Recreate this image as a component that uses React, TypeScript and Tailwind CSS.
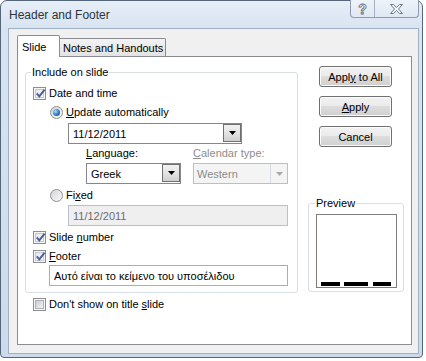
import type { ReactNode } from "react";

function Checkbox({ checked = false }: { checked?: boolean }) {
  return (
    <span className="relative flex h-[13px] w-[13px] shrink-0 items-center justify-center border border-[#8e8f8f] bg-[#f6f6f6]">
      <span
        className={
          checked
            ? "h-[9px] w-[9px] border border-[#c4c8cd] bg-[linear-gradient(135deg,#e3e6ea,#ffffff)]"
            : "h-[9px] w-[9px] border border-[#aeb3b9] bg-[linear-gradient(135deg,#c9cdd3,#f4f4f4)]"
        }
      />
      {checked ? (
        <svg
          className="absolute left-[1px] top-[0px]"
          width="11"
          height="11"
          viewBox="0 0 11 11"
        >
          <path
            d="M1.8 5.4 L4.3 8.4 L9.6 1.6"
            fill="none"
            stroke="#4b5e98"
            strokeWidth="1.9"
          />
        </svg>
      ) : null}
    </span>
  );
}

function Radio({ checked = false }: { checked?: boolean }) {
  return (
    <span className="flex h-[13px] w-[13px] shrink-0 items-center justify-center rounded-full border border-[#8e8f8f] bg-[linear-gradient(135deg,#d2d5d9,#fbfbfb)]">
      {checked ? (
        <span className="h-[7px] w-[7px] rounded-full bg-[radial-gradient(circle_at_35%_35%,#a9def8,#2c78c4_55%,#0f3d7c)]" />
      ) : null}
    </span>
  );
}

function Arrow({ color }: { color: string }) {
  return (
    <svg width="7" height="4" viewBox="0 0 7 4">
      <polygon points="0,0 7,0 3.5,4" fill={color} />
    </svg>
  );
}

function Combo({
  value,
  className,
  disabled = false,
}: {
  value: string;
  className: string;
  disabled?: boolean;
}) {
  return (
    <div
      className={
        disabled
          ? `flex h-[21px] items-center border border-[#b4c1d0] bg-[#f4f4f4] pl-[3px] text-[#8b8b8b] ${className}`
          : `flex h-[21px] items-center border border-[#828790] bg-white pl-[4px] ${className}`
      }
    >
      <span className="flex-1">{value}</span>
      {disabled ? (
        <span className="flex h-[19px] w-[17px] items-center justify-center border-l border-[#d3dbe4] bg-[#f4f4f4]">
          <Arrow color="#a8a8a8" />
        </span>
      ) : (
        <span className="mb-[1px] flex h-[18px] w-[18px] items-center justify-center self-start border border-[#707070] bg-[linear-gradient(180deg,#f2f2f2,#e3e3e3_50%,#cfcfcf)]">
          <Arrow color="#000000" />
        </span>
      )}
    </div>
  );
}

function Btn({ children }: { children: ReactNode }) {
  return (
    <button
      type="button"
      className="ml-[11px] flex h-[21px] w-[73px] items-center justify-center rounded-[3px] border border-[#707070] bg-[linear-gradient(180deg,#f2f2f2_0%,#ebebeb_45%,#dddddd_50%,#cfcfcf_100%)] shadow-[inset_0_0_0_1px_#fbfbfb]"
    >
      <span>{children}</span>
    </button>
  );
}

function TitleButtons() {
  return (
    <div className="-mt-px mr-[3px] flex h-[18px] overflow-hidden rounded-b-[4px] border border-t-0 border-[#8d9cb1] bg-[linear-gradient(180deg,#eef3f9,#dfe8f3)]">
      <span className="flex w-[24px] items-center justify-center border-r border-[#a4b2c4] text-[14px] font-bold text-[#f7f9fc] [-webkit-text-stroke:0.8px_#5c6b80]">
        ?
      </span>
      <span className="flex w-[43px] items-center justify-center">
        <svg width="13" height="10" viewBox="0 0 13 10">
          <polygon
            points="0.5,0.5 3.5,0.5 6.5,3.5 9.5,0.5 12.5,0.5 8.5,5 12.5,9.5 9.5,9.5 6.5,6.5 3.5,9.5 0.5,9.5 4.5,5"
            fill="#f5f8fb"
            stroke="#5c6b80"
            strokeWidth="0.9"
          />
        </svg>
      </span>
    </div>
  );
}

export default function App() {
  return (
    <div className="h-[361px] w-[426px] bg-white font-['Liberation_Sans','Noto_Sans',sans-serif] text-[11px] leading-[16px] text-black">
      <div className="flex h-[358px] w-[423px] flex-col rounded-t-[7px] rounded-b-[4px] border border-[#55657a] bg-[linear-gradient(180deg,#e6eef7_0px,#d8e4f1_28px,#ccdaeb_100%)]">
        <div className="flex h-[27px] items-start justify-between">
          <span className="ml-[8px] mt-[6px] text-[12px] text-[#2a3542]">Header and Footer</span>
          <TitleButtons />
        </div>

        <div className="ml-[7px] flex h-[326px] w-[411px] flex-col border border-[#a0b1c6] bg-[#f0f0f0] pl-[8px] pt-[6px]">
          <div className="flex h-[21px] items-end">
            <div className="relative z-10 -mb-px flex h-[22px] w-[43px] items-start rounded-t-[2px] border border-b-0 border-[#898c95] bg-white pl-[4px] pt-[3px]">
              Slide
            </div>
            <div className="flex h-[18px] w-[106px] items-center rounded-tr-[2px] border-r border-t border-[#898c95] bg-[linear-gradient(180deg,#f3f3f3,#e3e3e3)] pl-[3px] pt-[1px]">
              Notes and Handouts
            </div>
          </div>

          <div className="flex h-[289px] w-[395px] border border-[#898c95] bg-white">
            <div className="w-[280px] pl-[7px]">
              <fieldset className="mt-[7px] w-[273px] min-w-0 rounded-[3px] border border-[#d5dfe5] pb-[6px]">
                <legend className="ml-[5px] px-[1px]">Include on slide</legend>

                <div className="ml-[7px] mt-[5px] flex h-[16px] items-center gap-[3px]">
                  <Checkbox checked />
                  <span>Date and time</span>
                </div>

                <div className="ml-[24px] mt-[3px] flex h-[16px] items-center gap-[3px]">
                  <Radio checked />
                  <span>
                    <u>U</u>pdate automatically
                  </span>
                </div>

                <Combo value="11/12/2011" className="ml-[42px] mt-[3px] w-[174px]" />

                <div className="ml-[60px] mt-[1px] flex h-[16px] items-center">
                  <span className="w-[107px]">
                    <u>L</u>anguage:
                  </span>
                  <span className="text-[#8d8d8d]">
                    <u>C</u>alendar type:
                  </span>
                </div>

                <div className="ml-[60px] mt-[2px] flex gap-[12px]">
                  <Combo value="Greek" className="w-[95px]" />
                  <Combo value="Western" className="w-[95px]" disabled />
                </div>

                <div className="ml-[24px] mt-[3px] flex h-[16px] items-center gap-[3px]">
                  <Radio />
                  <span>
                    Fi<u>x</u>ed
                  </span>
                </div>

                <div className="ml-[42px] mt-[2px] flex h-[21px] w-[220px] items-center border border-[#b4c1d0] bg-[#efefef] pl-[4px] text-[#6d6d6d]">
                  11/12/2011
                </div>

                <div className="ml-[7px] mt-[3px] flex h-[16px] items-center gap-[3px]">
                  <Checkbox checked />
                  <span>
                    Slide <u>n</u>umber
                  </span>
                </div>

                <div className="ml-[7px] mt-[3px] flex h-[16px] items-center gap-[3px]">
                  <Checkbox checked />
                  <span>
                    <u>F</u>ooter
                  </span>
                </div>

                <div className="ml-[23px] mt-[1px] flex h-[21px] w-[239px] items-center border border-[#abadb3] bg-white pl-[4px]">
                  Αυτό είναι το κείμενο του υποσέλιδου
                </div>
              </fieldset>

              <div className="ml-[8px] mt-[3px] flex h-[16px] items-center gap-[3px]">
                <Checkbox />
                <span>
                  Don't show on title <u>s</u>lide
                </span>
              </div>
            </div>

            <div className="ml-[10px] w-[96px]">
              <div className="mt-[9px]">
                <Btn>
                  Appl<u>y</u> to All
                </Btn>
              </div>
              <div className="mt-[9px]">
                <Btn>
                  <u>A</u>pply
                </Btn>
              </div>
              <div className="mt-[9px]">
                <Btn>Cancel</Btn>
              </div>

              <fieldset className="mt-[48px] w-[96px] min-w-0 rounded-[3px] border border-[#d5dfe5] pb-[3px]">
                <legend className="ml-[6px] px-[1px]">Preview</legend>
                <div className="ml-[7px] mt-[3px] flex h-[74px] w-[81px] items-end border border-[#7d7d7d] pb-[1px] pl-[4px]">
                  <span className="h-[4px] w-[19px] bg-black" />
                  <span className="ml-[4px] h-[4px] w-[24px] bg-black" />
                  <span className="ml-[5px] h-[4px] w-[18px] bg-black" />
                </div>
              </fieldset>
            </div>
          </div>
        </div>
      </div>
    </div>
  );
}
